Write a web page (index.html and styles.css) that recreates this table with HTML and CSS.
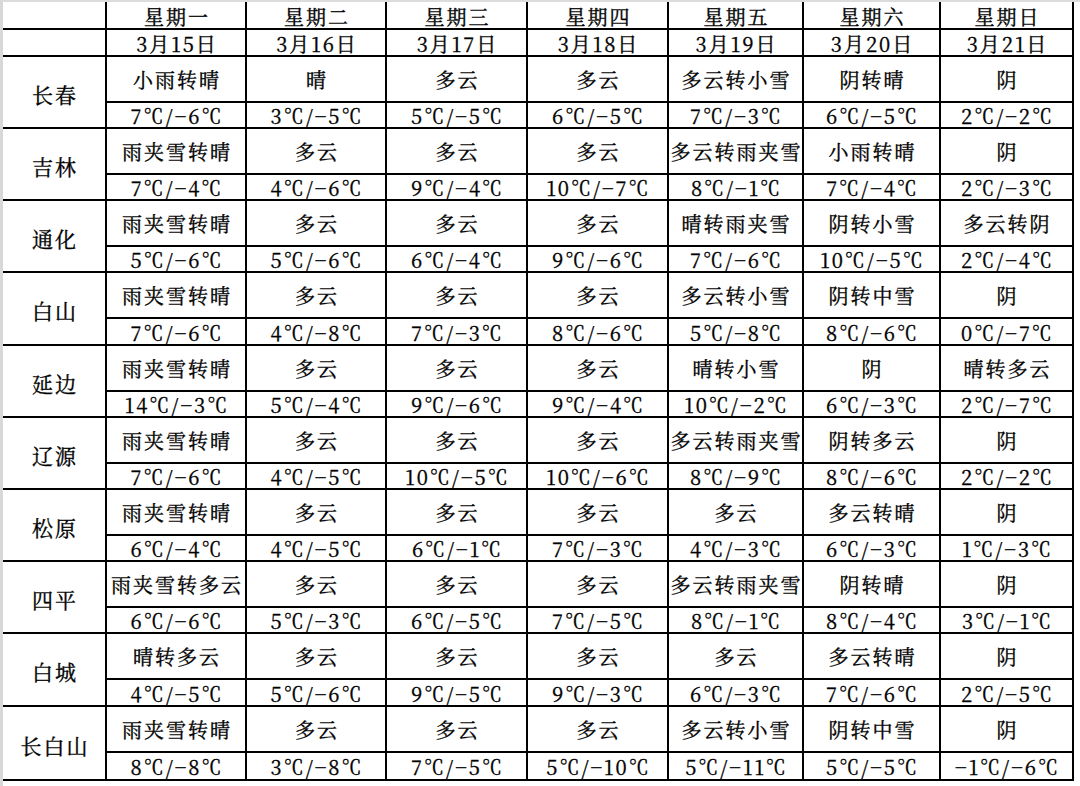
FILE: index.html
```html
<!DOCTYPE html>
<html lang="zh-CN">
<head>
<meta charset="utf-8">
<title>吉林省一周天气预报</title>
<link rel="stylesheet" href="styles.css">
</head>
<body>
<div class="page">
<div class="sheet">
  <div class="c hd"></div>
  <div class="c hd">星期一</div><div class="c hd">星期二</div><div class="c hd">星期三</div><div class="c hd">星期四</div><div class="c hd">星期五</div><div class="c hd">星期六</div><div class="c hd">星期日</div>
  <div class="c hd"></div>
  <div class="c hd">3月15日</div><div class="c hd">3月16日</div><div class="c hd">3月17日</div><div class="c hd">3月18日</div><div class="c hd">3月19日</div><div class="c hd">3月20日</div><div class="c hd">3月21日</div>

  <div class="c city">长春</div>
  <div class="c w">小雨转晴</div><div class="c w">晴</div><div class="c w">多云</div><div class="c w">多云</div><div class="c w">多云转小雪</div><div class="c w">阴转晴</div><div class="c w">阴</div>
  <div class="c t">7℃/−6℃</div><div class="c t">3℃/−5℃</div><div class="c t">5℃/−5℃</div><div class="c t">6℃/−5℃</div><div class="c t">7℃/−3℃</div><div class="c t">6℃/−5℃</div><div class="c t">2℃/−2℃</div>

  <div class="c city">吉林</div>
  <div class="c w">雨夹雪转晴</div><div class="c w">多云</div><div class="c w">多云</div><div class="c w">多云</div><div class="c w">多云转雨夹雪</div><div class="c w">小雨转晴</div><div class="c w">阴</div>
  <div class="c t">7℃/−4℃</div><div class="c t">4℃/−6℃</div><div class="c t">9℃/−4℃</div><div class="c t">10℃/−7℃</div><div class="c t">8℃/−1℃</div><div class="c t">7℃/−4℃</div><div class="c t">2℃/−3℃</div>

  <div class="c city">通化</div>
  <div class="c w">雨夹雪转晴</div><div class="c w">多云</div><div class="c w">多云</div><div class="c w">多云</div><div class="c w">晴转雨夹雪</div><div class="c w">阴转小雪</div><div class="c w">多云转阴</div>
  <div class="c t">5℃/−6℃</div><div class="c t">5℃/−6℃</div><div class="c t">6℃/−4℃</div><div class="c t">9℃/−6℃</div><div class="c t">7℃/−6℃</div><div class="c t">10℃/−5℃</div><div class="c t">2℃/−4℃</div>

  <div class="c city">白山</div>
  <div class="c w">雨夹雪转晴</div><div class="c w">多云</div><div class="c w">多云</div><div class="c w">多云</div><div class="c w">多云转小雪</div><div class="c w">阴转中雪</div><div class="c w">阴</div>
  <div class="c t">7℃/−6℃</div><div class="c t">4℃/−8℃</div><div class="c t">7℃/−3℃</div><div class="c t">8℃/−6℃</div><div class="c t">5℃/−8℃</div><div class="c t">8℃/−6℃</div><div class="c t">0℃/−7℃</div>

  <div class="c city">延边</div>
  <div class="c w">雨夹雪转晴</div><div class="c w">多云</div><div class="c w">多云</div><div class="c w">多云</div><div class="c w">晴转小雪</div><div class="c w">阴</div><div class="c w">晴转多云</div>
  <div class="c t">14℃/−3℃</div><div class="c t">5℃/−4℃</div><div class="c t">9℃/−6℃</div><div class="c t">9℃/−4℃</div><div class="c t">10℃/−2℃</div><div class="c t">6℃/−3℃</div><div class="c t">2℃/−7℃</div>

  <div class="c city sel">辽源</div>
  <div class="c w">雨夹雪转晴</div><div class="c w">多云</div><div class="c w">多云</div><div class="c w">多云</div><div class="c w">多云转雨夹雪</div><div class="c w">阴转多云</div><div class="c w">阴</div>
  <div class="c t">7℃/−6℃</div><div class="c t">4℃/−5℃</div><div class="c t">10℃/−5℃</div><div class="c t">10℃/−6℃</div><div class="c t">8℃/−9℃</div><div class="c t">8℃/−6℃</div><div class="c t">2℃/−2℃</div>

  <div class="c city">松原</div>
  <div class="c w">雨夹雪转晴</div><div class="c w">多云</div><div class="c w">多云</div><div class="c w">多云</div><div class="c w">多云</div><div class="c w">多云转晴</div><div class="c w">阴</div>
  <div class="c t">6℃/−4℃</div><div class="c t">4℃/−5℃</div><div class="c t">6℃/−1℃</div><div class="c t">7℃/−3℃</div><div class="c t">4℃/−3℃</div><div class="c t">6℃/−3℃</div><div class="c t">1℃/−3℃</div>

  <div class="c city">四平</div>
  <div class="c w">雨夹雪转多云</div><div class="c w">多云</div><div class="c w">多云</div><div class="c w">多云</div><div class="c w">多云转雨夹雪</div><div class="c w">阴转晴</div><div class="c w">阴</div>
  <div class="c t">6℃/−6℃</div><div class="c t">5℃/−3℃</div><div class="c t">6℃/−5℃</div><div class="c t">7℃/−5℃</div><div class="c t">8℃/−1℃</div><div class="c t">8℃/−4℃</div><div class="c t">3℃/−1℃</div>

  <div class="c city">白城</div>
  <div class="c w">晴转多云</div><div class="c w">多云</div><div class="c w">多云</div><div class="c w">多云</div><div class="c w">多云</div><div class="c w">多云转晴</div><div class="c w">阴</div>
  <div class="c t">4℃/−5℃</div><div class="c t">5℃/−6℃</div><div class="c t">9℃/−5℃</div><div class="c t">9℃/−3℃</div><div class="c t">6℃/−3℃</div><div class="c t">7℃/−6℃</div><div class="c t">2℃/−5℃</div>

  <div class="c city">长白山</div>
  <div class="c w">雨夹雪转晴</div><div class="c w">多云</div><div class="c w">多云</div><div class="c w">多云</div><div class="c w">多云转小雪</div><div class="c w">阴转中雪</div><div class="c w">阴</div>
  <div class="c t">8℃/−8℃</div><div class="c t">3℃/−8℃</div><div class="c t">7℃/−5℃</div><div class="c t">5℃/−10℃</div><div class="c t">5℃/−11℃</div><div class="c t">5℃/−5℃</div><div class="c t">−1℃/−6℃</div>
</div>
</div>
</body>
</html>
```
FILE: styles.css
```css
html, body {
  margin: 0;
  padding: 0;
  background: #ffffff;
}
.page {
  width: 1080px;
  height: 786px;
  box-sizing: border-box;
  border-top: 2px solid #dcdcdc;
  border-left: 3px solid #d8d8d8;
  overflow: hidden;
}
.sheet {
  display: grid;
  width: 1071px;
  grid-template-columns: 104px 140px 140px 141px 141px 135px 137px 133px;
  grid-template-rows:
    28px 27px
    46px 26px 46px 26px 46px 26px 46px 27px 46px 26px
    46px 26px 46px 26px 46px 26px 46px 27px 46px 28px;
  font-family: "Noto Serif CJK SC", "Liberation Serif", "Noto Sans CJK SC", serif;
  color: #000;
}
.c {
  box-sizing: border-box;
  border-right: 2px solid #000;
  border-bottom: 2px solid #000;
  display: flex;
  align-items: center;
  justify-content: center;
  white-space: nowrap;
  font-size: 20px;
  letter-spacing: 2px;
  padding-left: 2px;
  line-height: 1;
  -webkit-text-stroke: 0.35px #000;
}
.hd {
  padding-top: 3px;
}
.city {
  grid-row: span 2;
  font-size: 21px;
  padding-top: 4px;
}
.w {
  padding-top: 1px;
}
.t {
  padding-top: 2px;
}
.sel {
  position: relative;
}
.sel::before {
  content: "";
  position: absolute;
  left: -2px;
  top: -1px;
  width: 2px;
  height: 46px;
  background: #4cbb50;
}
```
